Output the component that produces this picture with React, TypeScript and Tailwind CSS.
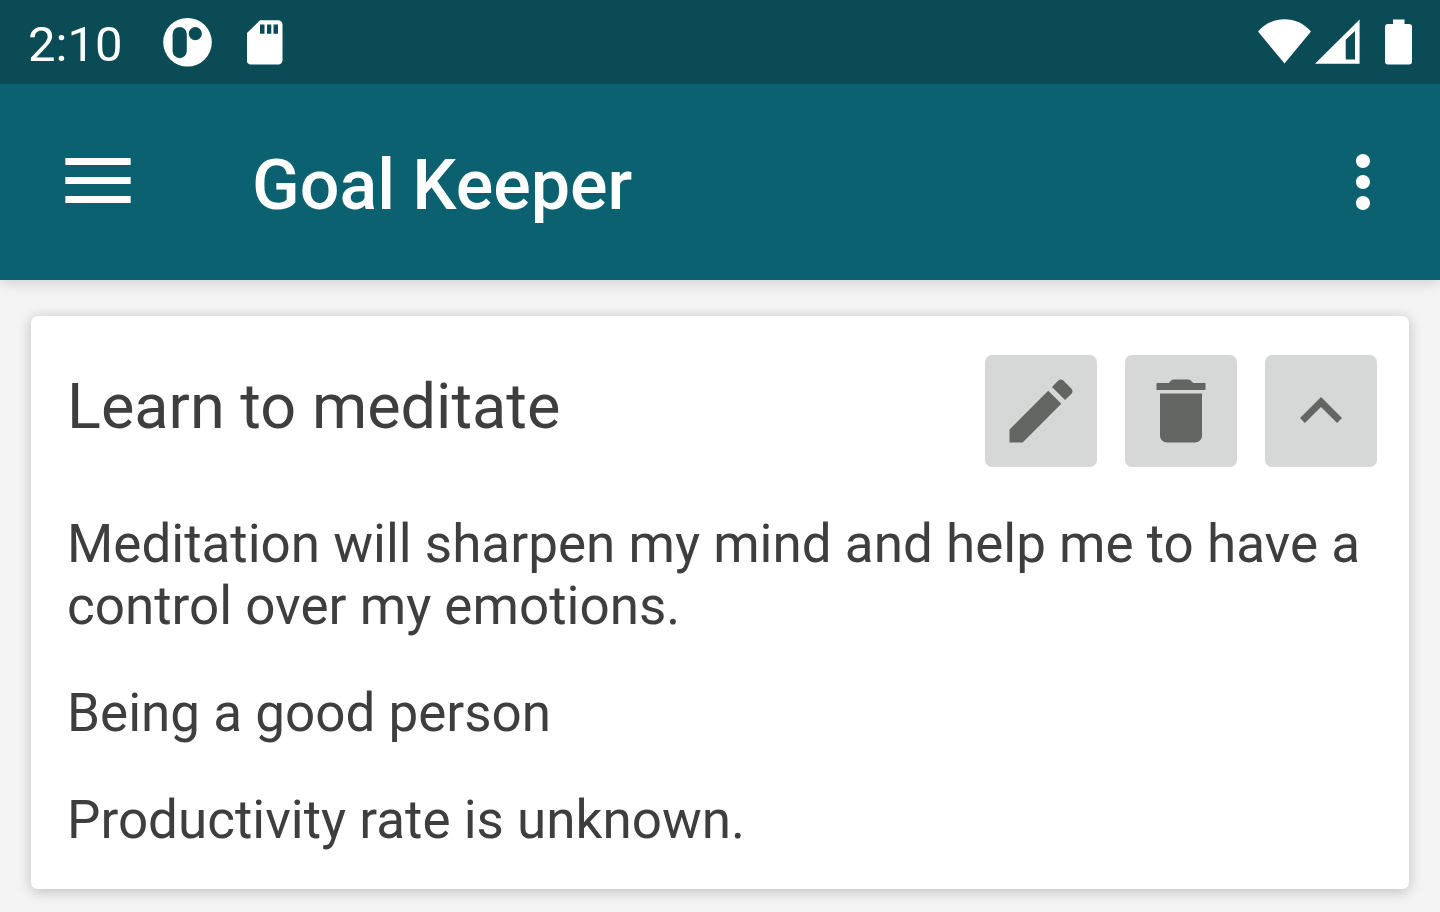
import { useState } from "react";

function NotificationIcon() {
  return (
    <svg viewBox="0 0 50 50" className="size-[50px]" fill="#fff" aria-hidden="true">
      <path
        fillRule="evenodd"
        d="M24.500 1a24.300 24.300 0 1 1 0 48.600a24.300 24.300 0 1 1 0-48.600z M16.700 10a7.100 7.100 0 0 0-7.100 7.100v17a7.100 7.100 0 0 0 14.200 0v-17a7.100 7.100 0 0 0-7.100-7.100z M32.300 10a6.600 6.600 0 1 0 0 13.200a6.600 6.600 0 1 0 0-13.200z"
      />
    </svg>
  );
}

function SdCardIcon() {
  return (
    <svg viewBox="0 0 36 45" className="h-[45px] w-9" fill="#fff" aria-hidden="true">
      <path
        fillRule="evenodd"
        d="M13 .3H31.200a4.300 4.300 0 0 1 4.300 4.300v35.600a4.300 4.300 0 0 1-4.300 4.300H3.900a4.300 4.300 0 0 1-4.300-4.300V13.500z M13 4.500v9.300h4.500v-9.300z M20 4.500v9.300h4.300v-9.300z M26.500 4.500v9.300h4.500v-9.300z"
      />
    </svg>
  );
}

function WifiIcon() {
  return (
    <svg viewBox="0 0 53 45" className="h-[45px] w-[53px] overflow-visible" fill="#fff" aria-hidden="true">
      <path d="M26.500 43.500L0 11.500C7 3.500 16.500 -.7 26.500 -.7S46 3.500 53 11.500z" />
    </svg>
  );
}

function SignalIcon() {
  return (
    <svg viewBox="0 0 45 45" className="size-[45px] overflow-visible" fill="#fff" aria-hidden="true">
      <path fillRule="evenodd" d="M0 43.800L44.600 -.6V43.800z M30.700 19.700V39.500H40V11z" />
    </svg>
  );
}

function BatteryIcon() {
  return (
    <svg viewBox="0 0 27 46" className="h-[46px] w-[27px]" fill="#fff" aria-hidden="true">
      <path d="M8 .5h11.500v4.500h4.500a3 3 0 0 1 3 3v34.500a3 3 0 0 1-3 3H3a3 3 0 0 1-3-3V8a3 3 0 0 1 3-3h5z" />
    </svg>
  );
}

function Icon({ d }: { d: string }) {
  return (
    <svg viewBox="0 0 24 24" className="size-[84px]" fill="currentColor" aria-hidden="true">
      <path d={d} />
    </svg>
  );
}

const icons = {
  menu: "M2.670 5.140h18.660v2H2.670zM2.670 10.570h18.660v2H2.670zM2.670 16h18.660v2H2.670z",
  more: "M12 8c1.100 0 2-.9 2-2s-.9-2-2-2-2 .9-2 2 .9 2 2 2zm0 2c-1.100 0-2 .9-2 2s.9 2 2 2 2-.9 2-2-.9-2-2-2zm0 6c-1.100 0-2 .9-2 2s.9 2 2 2 2-.9 2-2-.9-2-2-2z",
  edit: "M3 17.250V21h3.750L17.810 9.940l-3.750-3.750L3 17.250zM20.710 7.040c.39-.39.39-1.020 0-1.410l-2.340-2.340c-.39-.39-1.020-.39-1.410 0l-1.830 1.830 3.750 3.750 1.830-1.830z",
  remove: "M6 19c0 1.100.9 2 2 2h8c1.100 0 2-.9 2-2V7H6v12zM19 4h-3.500l-.71-.71c-.18-.18-.44-.29-.7-.29H9.910c-.26 0-.52.11-.7.29L8.500 4H5v2h14V4z",
  up: "M12 8l-6 6 1.410 1.410L12 10.830l4.590 4.580L18 14z",
  down: "M16.590 8.590L12 13.170 7.410 8.590 6 10l6 6 6-6z",
};

function CardButton({ label, icon, onClick, expanded }: {
  label: string;
  icon: string;
  onClick?: () => void;
  expanded?: boolean;
}) {
  return (
    <button
      type="button"
      aria-label={label}
      aria-expanded={expanded}
      onClick={onClick}
      className="flex size-28 items-center justify-center rounded-[7px] bg-[#d6d8d7] text-[#636563]"
    >
      <Icon d={icon} />
    </button>
  );
}

export default function App() {
  const [open, setOpen] = useState(true);

  return (
    <div className="min-h-screen bg-[#f4f4f4] font-['Roboto',sans-serif] text-[#3e3e3e]">
      <div className="relative z-10 flex h-[84px] items-center justify-between bg-[#0b4b55] px-7 text-white">
        <div className="flex items-center">
          <time className="pt-1 text-[49px] leading-none">2:10</time>
          <div className="ml-[41px] flex items-center gap-[34px]">
            <NotificationIcon />
            <SdCardIcon />
          </div>
        </div>
        <div className="flex items-center">
          <WifiIcon />
          <span className="ml-1">
            <SignalIcon />
          </span>
          <span className="ml-[25px]">
            <BatteryIcon />
          </span>
        </div>
      </div>

      <header className="flex h-[196px] items-center bg-[#0c6170] pr-[35px] pl-14 text-white shadow-[0_2px_14px_rgba(0,0,0,0.16)]">
        <button type="button" aria-label="Open navigation">
          <Icon d={icons.menu} />
        </button>
        <h1 className="ml-28 flex-1 pt-1.5 text-[70px] leading-[82px] font-medium">Goal Keeper</h1>
        <button type="button" aria-label="More options">
          <Icon d={icons.more} />
        </button>
      </header>

      <main className="px-[31px] pt-9 pb-[23px]">
        <article className="rounded-[7px] bg-white pt-[39px] pr-8 pb-[38px] pl-9 shadow-[0_2px_14px_rgba(0,0,0,0.24)]">
          <div className="flex items-start gap-7">
            <h2 className="flex-1 pt-[15px] text-[63px] leading-[74px]">Learn to meditate</h2>
            <CardButton label="Edit goal" icon={icons.edit} />
            <CardButton label="Delete goal" icon={icons.remove} />
            <CardButton
              label={open ? "Collapse" : "Expand"}
              icon={open ? icons.up : icons.down}
              expanded={open}
              onClick={() => setOpen(!open)}
            />
          </div>
          {open && (
            <div className="flex flex-col gap-[45px] pt-[46px] text-[53px] leading-[62px]">
              <p>Meditation will sharpen my mind and help me to have a control over my emotions.</p>
              <p>Being a good person</p>
              <p>Productivity rate is unknown.</p>
            </div>
          )}
        </article>
      </main>
    </div>
  );
}
